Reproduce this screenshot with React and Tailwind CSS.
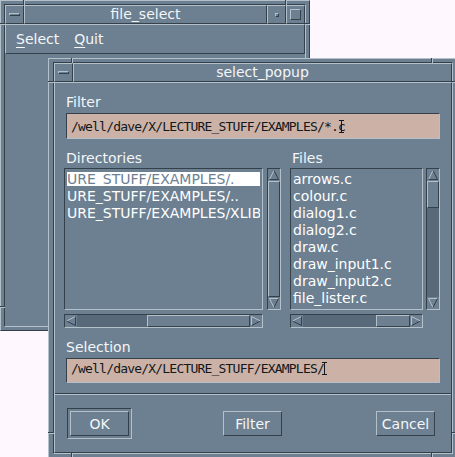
import React from "react";

const RAISED = "border border-t-[#b4c0ca] border-l-[#b4c0ca] border-r-[#34404a] border-b-[#34404a]";
const SUNKEN = "border border-t-[#34404a] border-l-[#34404a] border-r-[#b4c0ca] border-b-[#b4c0ca]";
const VN = "absolute w-[2px] border-l border-r border-l-[#34404a] border-r-[#b4c0ca]";
const HN = "absolute h-[2px] border-t border-b border-t-[#34404a] border-b-[#b4c0ca]";
const MONO = "font-['DejaVu_Sans_Mono',monospace] text-[13px] leading-[15px] tracking-[-0.8px] text-[#111820] whitespace-nowrap";

const LC = "#b4c0ca";
const DC = "#34404a";

function Arrow({ dir }) {
  let lines;
  if (dir === "up")
    lines = [
      [6, 1.5, 1.5, 10.5, LC],
      [6, 1.5, 10.5, 10.5, DC],
      [1.5, 10.5, 10.5, 10.5, DC],
    ];
  else if (dir === "down")
    lines = [
      [1.5, 1.5, 10.5, 1.5, LC],
      [1.5, 1.5, 6, 10.5, LC],
      [10.5, 1.5, 6, 10.5, DC],
    ];
  else if (dir === "left")
    lines = [
      [1.5, 6, 10.5, 1.5, LC],
      [1.5, 6, 10.5, 10.5, DC],
      [10.5, 1.5, 10.5, 10.5, DC],
    ];
  else
    lines = [
      [1.5, 1.5, 1.5, 10.5, LC],
      [1.5, 1.5, 10.5, 6, LC],
      [1.5, 10.5, 10.5, 6, DC],
    ];
  return (
    <div className="w-[12px] h-[12px] shrink-0 bg-[#6c8092]">
      <svg width="12" height="12" viewBox="0 0 12 12" className="block">
        {lines.map((l, i) => (
          <line key={i} x1={l[0]} y1={l[1]} x2={l[2]} y2={l[3]} stroke={l[4]} strokeWidth="1" />
        ))}
      </svg>
    </div>
  );
}

function IBeam() {
  return (
    <svg width="5" height="13" viewBox="0 0 5 13" className="inline-block align-[-2px]">
      <line x1="0" y1="0.5" x2="5" y2="0.5" stroke="#111820" strokeWidth="1" />
      <line x1="2.5" y1="0.5" x2="2.5" y2="12.5" stroke="#111820" strokeWidth="1" />
      <line x1="0" y1="12.5" x2="5" y2="12.5" stroke="#111820" strokeWidth="1" />
    </svg>
  );
}

function VScrollFull() {
  return (
    <div className={`w-[14px] h-full ${SUNKEN} bg-[#586a79] flex flex-col`}>
      <Arrow dir="up" />
      <div className={`flex-1 ${RAISED} bg-[#6c8092]`} />
      <Arrow dir="down" />
    </div>
  );
}

function VScrollShort() {
  return (
    <div className={`w-[14px] h-full ${SUNKEN} bg-[#586a79] flex flex-col`}>
      <Arrow dir="up" />
      <div className="flex-1 flex flex-col">
        <div className={`h-[27px] ${RAISED} bg-[#6c8092]`} />
      </div>
      <Arrow dir="down" />
    </div>
  );
}

function MenuBar() {
  return (
    <div className="w-[19px] h-full shrink-0 flex items-center justify-center">
      <div className={`w-[11px] h-[3px] ${RAISED}`} />
    </div>
  );
}

function Button({ label, def }) {
  return (
    <div className={`w-[65px] h-[31px] ${def ? SUNKEN + " p-[2px]" : "p-[3px]"}`}>
      <div className={`h-full ${RAISED} flex items-center justify-center pt-[2px]`}>{label}</div>
    </div>
  );
}

function BackWindow() {
  return (
    <div className={`absolute left-0 top-0 w-[310px] h-[331px] bg-[#6c8092] ${RAISED} p-[3px]`}>
      <div className={`${VN} left-[22px] top-[-1px] h-[5px]`} />
      <div className={`${VN} left-[284px] top-[-1px] h-[5px]`} />
      <div className={`${HN} left-[-1px] top-[22px] w-[5px]`} />
      <div className={`${HN} left-[304px] top-[22px] w-[5px]`} />
      <div className={`${HN} left-[-1px] top-[305px] w-[5px]`} />
      <div className={`h-full flex flex-col ${SUNKEN}`}>
        <div className="flex h-[19px] shrink-0">
          <div className={`w-[19px] h-full ${RAISED} flex items-center justify-center`}>
            <div className={`w-[11px] h-[3px] ${RAISED}`} />
          </div>
          <div className={`flex-1 h-full ${RAISED} flex items-center justify-center`}>file_select</div>
          <div className={`w-[19px] h-full ${RAISED} flex items-center justify-center`}>
            <div className={`w-[4px] h-[4px] ${RAISED}`} />
          </div>
          <div className={`w-[19px] h-full ${RAISED} flex items-center justify-center`}>
            <div className={`w-[11px] h-[11px] ${RAISED}`} />
          </div>
        </div>
        <div className={`h-[30px] shrink-0 ${RAISED} flex gap-[15px] pl-[10px] pt-[6px]`}>
          <span>
            <span className="underline decoration-1 underline-offset-[3px]">S</span>elect
          </span>
          <span>
            <span className="underline decoration-1 underline-offset-[3px]">Q</span>uit
          </span>
        </div>
        <div className="flex-1" />
      </div>
    </div>
  );
}

function Popup() {
  const files = [
    "arrows.c",
    "colour.c",
    "dialog1.c",
    "dialog2.c",
    "draw.c",
    "draw_input1.c",
    "draw_input2.c",
    "file_lister.c",
  ];
  return (
    <div className={`absolute left-[48px] top-[58px] w-[410px] h-[400px] bg-[#6c8092] ${RAISED} pt-[3px] px-[4px] pb-[3px]`}>
      <div className={`${VN} left-[22px] top-[-1px] h-[5px]`} />
      <div className={`${VN} left-[382px] top-[-1px] h-[5px]`} />
      <div className={`${VN} left-[22px] top-[394px] h-[5px]`} />
      <div className={`${VN} left-[382px] top-[394px] h-[5px]`} />
      <div className={`${HN} left-[-1px] top-[22px] w-[6px]`} />
      <div className={`${HN} left-[-1px] top-[373px] w-[6px]`} />
      <div className={`${HN} left-[403px] top-[22px] w-[6px]`} />
      <div className={`${HN} left-[403px] top-[373px] w-[6px]`} />
      <div className={`h-full flex flex-col ${SUNKEN}`}>
        <div className="flex h-[19px] shrink-0">
          <div className={`w-[19px] h-full ${RAISED} flex items-center justify-center`}>
            <div className={`w-[11px] h-[3px] ${RAISED}`} />
          </div>
          <div className={`flex-1 h-full ${RAISED} flex items-center justify-center`}>select_popup</div>
        </div>
        <div className={`flex-1 ${RAISED} flex flex-col pt-[11px]`}>
          <div className="ml-[11px] h-[17px]">Filter</div>
          <div className={`mt-[2px] mx-[11px] h-[26px] shrink-0 bg-[#ccb2a6] ${SUNKEN} pl-[4px] pt-[5px] ${MONO}`}>
            /well/dave/X/LECTURE_STUFF/EXAMPLES/*.c
            <span className="ml-[-6px]">
              <IBeam />
            </span>
          </div>
          <div className="mt-[11px] ml-[9px] mr-[11px] flex gap-[9px]">
            <div className="w-[217px] flex flex-col">
              <div className="ml-[2px] h-[18px]">Directories</div>
              <div className="flex gap-[4px] h-[142px]">
                <div className={`w-[199px] h-full ${SUNKEN} overflow-hidden pt-[2px] px-[2px] whitespace-nowrap text-white`}>
                  <div className="h-[17px] pt-[1px]">
                    <div className="h-[14px] leading-[14px] bg-white text-[#6c8092] overflow-hidden">URE_STUFF/EXAMPLES/.</div>
                  </div>
                  <div className="h-[17px] overflow-hidden">URE_STUFF/EXAMPLES/..</div>
                  <div className="h-[17px] overflow-hidden">URE_STUFF/EXAMPLES/XLIB</div>
                </div>
                <VScrollFull />
              </div>
              <div className={`mt-[4px] w-[199px] h-[14px] ${SUNKEN} bg-[#586a79] flex`}>
                <Arrow dir="left" />
                <div className="flex-1 flex">
                  <div className="w-[70px]" />
                  <div className={`flex-1 ${RAISED} bg-[#6c8092]`} />
                </div>
                <Arrow dir="right" />
              </div>
            </div>
            <div className="w-[150px] flex flex-col">
              <div className="ml-[2px] h-[18px]">Files</div>
              <div className="flex gap-[3px] h-[142px]">
                <div className={`w-[133px] h-full ${SUNKEN} overflow-hidden pt-[2px] px-[2px] whitespace-nowrap text-white`}>
                  {files.map((f) => (
                    <div key={f} className="h-[17px]">
                      {f}
                    </div>
                  ))}
                </div>
                <VScrollShort />
              </div>
              <div className={`mt-[4px] w-[133px] h-[14px] ${SUNKEN} bg-[#586a79] flex`}>
                <Arrow dir="left" />
                <div className="flex-1 flex">
                  <div className="w-[73px]" />
                  <div className={`flex-1 ${RAISED} bg-[#6c8092]`} />
                </div>
                <Arrow dir="right" />
              </div>
            </div>
          </div>
          <div className="mt-[11px] ml-[11px] h-[17px]">Selection</div>
          <div className={`mt-[2px] mx-[11px] h-[25px] shrink-0 bg-[#ccb2a6] ${SUNKEN} pl-[4px] pt-[2px] ${MONO}`}>
            /well/dave/X/LECTURE_STUFF/EXAMPLES/
            <span className="ml-[-2px]">
              <IBeam />
            </span>
          </div>
          <div className="mt-[10px] h-[2px] border-t border-b border-t-[#34404a] border-b-[#b4c0ca]" />
          <div className="mt-[13px] ml-[12px] mr-[13px] flex justify-between">
            <Button label="OK" def />
            <Button label="Filter" />
            <Button label="Cancel" />
          </div>
        </div>
      </div>
    </div>
  );
}

export default function App() {
  return (
    <div className="relative w-[455px] h-[457px] overflow-hidden bg-[#fef7fd] font-['DejaVu_Sans',sans-serif] text-[14px] leading-[17px] text-[#f4f6f8]">
      <BackWindow />
      <Popup />
    </div>
  );
}
